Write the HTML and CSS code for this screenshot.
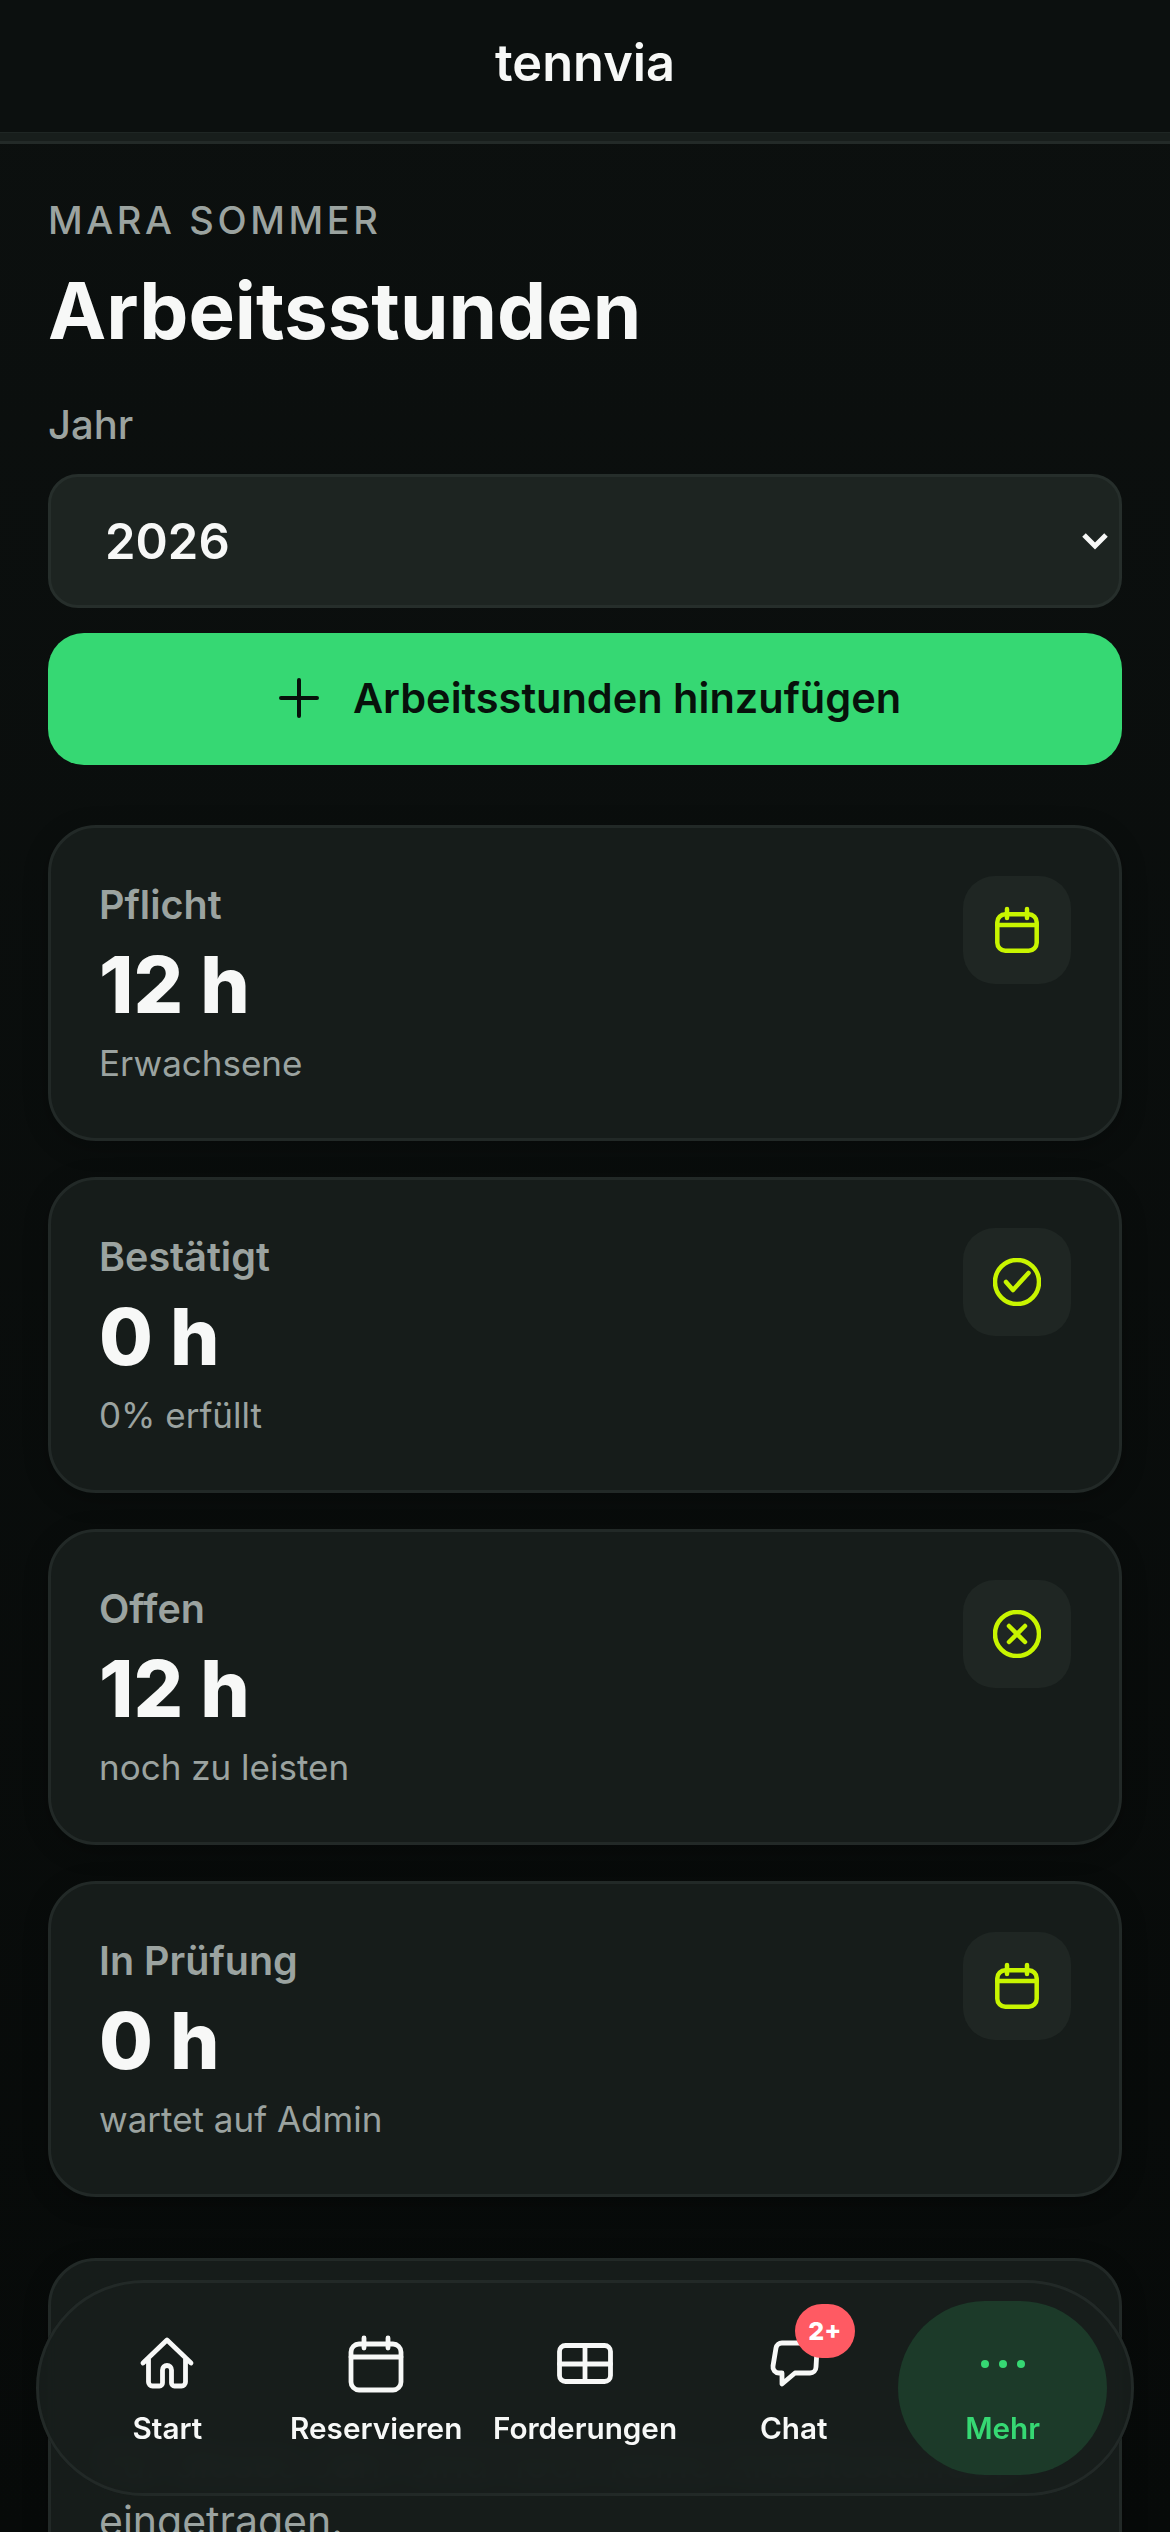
FILE: index.html
```html
<!DOCTYPE html>
<html lang="de">
<head>
<meta charset="UTF-8">
<meta name="viewport" content="width=device-width, initial-scale=1.0">
<title>Arbeitsstunden - tennvia</title>
<link rel="stylesheet" href="styles.css">
</head>
<body>
<header class="topbar">
    <div class="brand">tennvia</div>
</header>
<div class="topbar-strip"></div>

<main class="page">
    <div class="member">MARA SOMMER</div>
    <h1 class="title">Arbeitsstunden</h1>

    <div class="field-label">Jahr</div>
    <div class="select">
        <span>2026</span>
        <svg class="chevron" viewBox="0 0 26 18"><path d="M2 3l11 11L24 3"/></svg>
    </div>

    <button class="add-button">
        <svg class="plus" viewBox="0 0 40 40"><path d="M20 2v36M2 20h36"/></svg>
        Arbeitsstunden hinzufügen
    </button>

    <section class="card">
        <div class="card-text">
            <div class="card-label">Pflicht</div>
            <div class="card-value">12 h</div>
            <div class="card-note">Erwachsene</div>
        </div>
        <div class="card-icon">
            <svg viewBox="0 0 48 48"><rect x="4.3" y="8.3" width="39.4" height="36.4" rx="8"/><path d="M4.3 19h39.4M14 3v9M34 3v9"/></svg>
        </div>
    </section>

    <section class="card">
        <div class="card-text">
            <div class="card-label">Bestätigt</div>
            <div class="card-value">0 h</div>
            <div class="card-note">0% erfüllt</div>
        </div>
        <div class="card-icon">
            <svg viewBox="0 0 48 48"><circle cx="24" cy="24" r="22"/><path d="M13 24l7 8 15.500-17"/></svg>
        </div>
    </section>

    <section class="card">
        <div class="card-text">
            <div class="card-label">Offen</div>
            <div class="card-value">12 h</div>
            <div class="card-note">noch zu leisten</div>
        </div>
        <div class="card-icon">
            <svg viewBox="0 0 48 48"><circle cx="24" cy="24" r="22"/><path d="M16 16l16 16M32 16L16 32"/></svg>
        </div>
    </section>

    <section class="card">
        <div class="card-text">
            <div class="card-label">In Prüfung</div>
            <div class="card-value">0 h</div>
            <div class="card-note">wartet auf Admin</div>
        </div>
        <div class="card-icon">
            <svg viewBox="0 0 48 48"><rect x="4.3" y="8.3" width="39.4" height="36.4" rx="8"/><path d="M4.3 19h39.4M14 3v9M34 3v9"/></svg>
        </div>
    </section>

    <section class="card card-empty">
        <p class="empty-text">Für dieses Jahr sind noch keine Arbeitsstunden eingetragen.</p>
    </section>
</main>

<nav class="bottom-nav">
    <div class="nav-item">
        <svg class="nav-icon" viewBox="0 0 54 54"><path d="M3 26L27 3l24 23M8.500 22v23a4 4 0 0 0 4 4h7a3 3 0 0 0 3-3V33a4.500 4.500 0 0 1 9 0v13a3 3 0 0 0 3 3h7a4 4 0 0 0 4-4V22"/></svg>
        <span>Start</span>
    </div>
    <div class="nav-item">
        <svg class="nav-icon" viewBox="0 0 54 54"><rect x="2" y="7" width="50" height="46" rx="8"/><path d="M2 20h50M15 1v10M39 1v10"/></svg>
        <span>Reservieren</span>
    </div>
    <div class="nav-item">
        <svg class="nav-icon" viewBox="0 0 54 54"><rect x="1.500" y="8.500" width="51" height="36" rx="6"/><path d="M1.500 27h51M27 8.500v36"/></svg>
        <span>Forderungen</span>
    </div>
    <div class="nav-item">
        <div class="chat-wrap">
            <svg class="nav-icon" viewBox="0 0 54 54"><path d="M15 6h29a6 6 0 0 1 6 6.500L49 30a6 6 0 0 1-6 6H28L15 47V36h-3a6 6 0 0 1-6-7l3-18a6 6 0 0 1 6-5z"/></svg>
            <span class="badge">2+</span>
        </div>
        <span>Chat</span>
    </div>
    <div class="nav-item active">
        <svg class="nav-icon" viewBox="0 0 54 54"><circle cx="9" cy="27" r="4"/><circle cx="27" cy="27" r="4"/><circle cx="45" cy="27" r="4"/></svg>
        <span>Mehr</span>
    </div>
</nav>
</body>
</html>
```
FILE: styles.css
```css
* {
    box-sizing: border-box;
}
html, body {
    height: 100%;
}
body {
    margin: 0;
    overflow: hidden;
    background: linear-gradient(#0c100f, #070a09);
    color: #f7f8f7;
    font-family: Inter, "Liberation Sans", sans-serif;
}
.topbar {
    height: 132px;
    background-color: #0c100f;
    display: flex;
    justify-content: center;
    align-items: center;
}
.brand {
    font-size: 50.500px;
    font-weight: 600;
    margin-bottom: 8px;
}
.topbar-strip {
    height: 12px;
    background-color: #181e1c;
    border-top: 1px solid #1f2624;
    border-bottom: 3px solid #232a28;
}
.page {
    padding: 54px 48px 0;
}
.member {
    font-size: 38px;
    font-weight: 500;
    letter-spacing: 3.600px;
    line-height: 44px;
    color: #9ba3a0;
}
.title {
    margin: 23px 0 0;
    font-size: 78px;
    font-weight: 700;
    line-height: 92px;
    color: #f7f8f7;
}
.field-label {
    margin-top: 44px;
    font-size: 40px;
    font-weight: 500;
    line-height: 48px;
    color: #9ba3a0;
}
.select {
    margin-top: 25px;
    height: 134px;
    padding: 0 11px 0 54px;
    display: flex;
    justify-content: space-between;
    align-items: center;
    background-color: #1d2421;
    border: 3px solid #262e2b;
    border-radius: 30px;
    font-size: 49px;
    font-weight: 600;
}
.chevron {
    width: 26px;
    height: 18px;
    fill: none;
    stroke: #f7f8f7;
    stroke-width: 5;
}
.add-button {
    margin-top: 25px;
    width: 100%;
    height: 132px;
    padding: 0 0 3px 10px;
    display: flex;
    justify-content: center;
    align-items: center;
    gap: 34px;
    background-color: #36d873;
    border: none;
    border-radius: 36px;
    color: #07110b;
    font-family: inherit;
    font-size: 41.500px;
    font-weight: 600;
}
.plus {
    width: 40px;
    height: 40px;
    fill: none;
    stroke: #07110b;
    stroke-width: 4;
    stroke-linecap: round;
}
.card {
    margin-top: 36px;
    height: 316px;
    padding: 48px 48px 0 48px;
    display: flex;
    justify-content: space-between;
    align-items: flex-start;
    background-color: #161c1a;
    border: 3px solid #222927;
    border-radius: 48px;
    box-shadow: 0 6px 24px rgba(0, 0, 0, 0.25);
}
.add-button + .card {
    margin-top: 60px;
}
.card-text {
    padding-top: 5px;
}
.card-label {
    font-size: 39.500px;
    font-weight: 600;
    line-height: 48px;
    color: #9ba3a0;
}
.card-value {
    margin-top: 10px;
    font-size: 78px;
    font-weight: 800;
    line-height: 92px;
    color: #f7f8f7;
}
.card-note {
    margin-top: 10px;
    font-size: 35px;
    font-weight: 400;
    line-height: 44px;
    color: #9ba3a0;
}
.card-icon {
    width: 108px;
    height: 108px;
    display: flex;
    justify-content: center;
    align-items: center;
    background-color: #1f2623;
    border-radius: 32px;
}
.card-icon svg {
    width: 48px;
    height: 48px;
    fill: none;
    stroke: #c8f500;
    stroke-width: 4.500;
    stroke-linecap: round;
    stroke-linejoin: round;
}
.card-empty {
    margin-top: 61px;
    height: 400px;
}
.empty-text {
    margin: 125px 0 0;
    font-size: 41px;
    line-height: 58px;
    color: #9ba3a0;
}
.bottom-nav {
    position: fixed;
    left: 36px;
    right: 36px;
    bottom: 36px;
    height: 216px;
    padding: 18px 24px;
    display: grid;
    grid-template-columns: repeat(5, 1fr);
    background-color: rgba(23, 29, 27, 0.95);
    backdrop-filter: blur(14px);
    border: 3px solid #222927;
    border-radius: 108px;
}
.nav-item {
    display: flex;
    flex-direction: column;
    align-items: center;
    padding-top: 36px;
    gap: 19px;
    border-radius: 87px;
    font-size: 29.700px;
    font-weight: 600;
    color: #f7f8f7;
}
.nav-icon {
    width: 54px;
    height: 54px;
    overflow: visible;
    fill: none;
    stroke: #f7f8f7;
    stroke-width: 4.800;
    stroke-linecap: round;
    stroke-linejoin: round;
}
.chat-wrap {
    position: relative;
    height: 54px;
}
.badge {
    position: absolute;
    left: 28px;
    top: -33px;
    width: 60px;
    height: 54px;
    display: flex;
    justify-content: center;
    align-items: center;
    background-color: #ff5a63;
    border-radius: 27px;
    font-size: 25px;
    font-weight: 800;
    color: #fff;
}
.nav-item.active {
    background-color: #1c3a29;
    color: #36d873;
}
.nav-item.active .nav-icon {
    fill: #36d873;
    stroke: none;
}
```
